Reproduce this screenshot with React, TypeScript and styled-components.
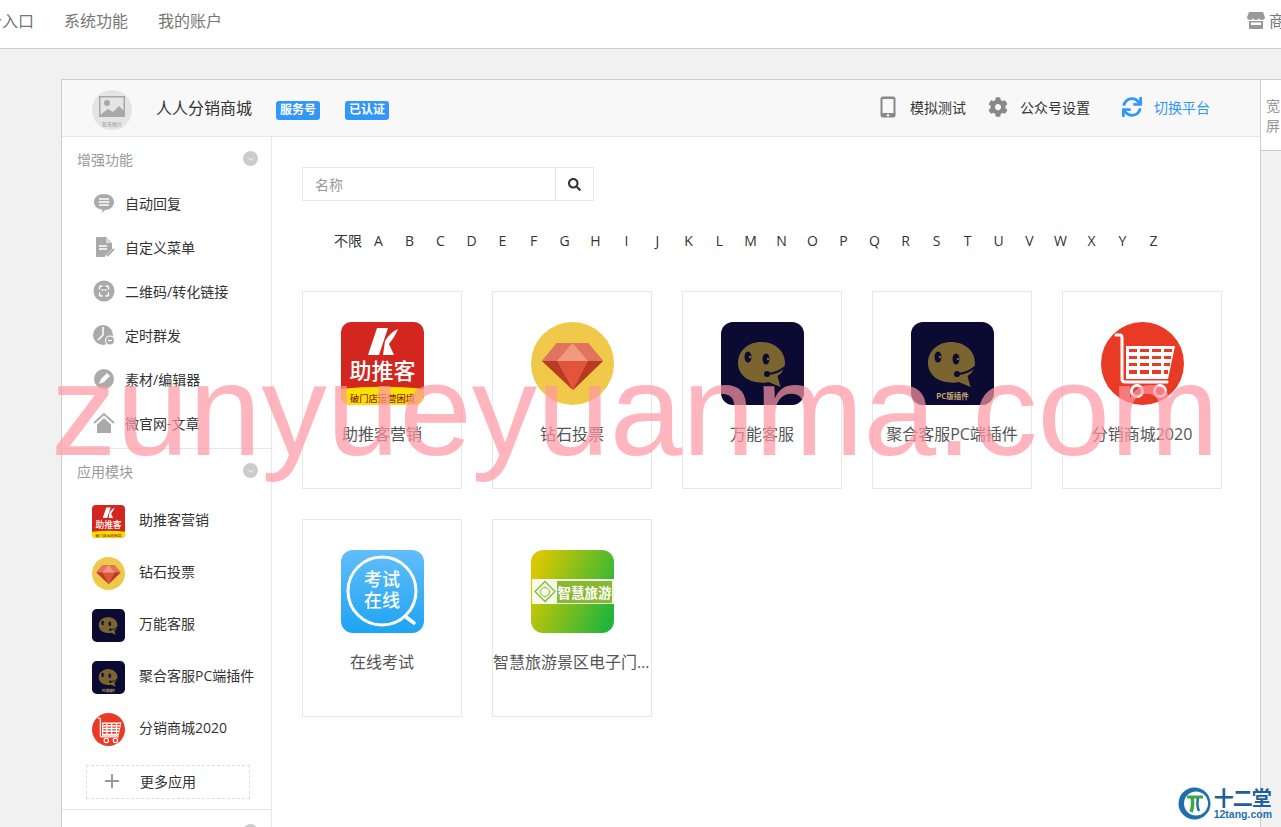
import React from "react";
import styled, { createGlobalStyle } from "styled-components";
import { FaCog, FaSearch, FaSync } from "react-icons/fa";
import { FiChevronDown } from "react-icons/fi";

const GlobalStyle = createGlobalStyle`
  html, body {
    margin: 0;
    padding: 0;
    background: #f1f1f1;
  }
  * {
    box-sizing: border-box;
  }
`;

const Page = styled.div`
  position: relative;
  width: 1281px;
  height: 827px;
  overflow: hidden;
  background: #f1f1f1;
  font-family: "Open Sans", "Noto Sans CJK SC", sans-serif;
  font-size: 14px;
  color: #333;
`;

const TopBar = styled.div`
  display: flex;
  height: 49px;
  padding: 0 0 8px 0;
  margin-left: -14px;
  margin-right: -20px;
  align-items: center;
  gap: 30px;
  background: #fff;
  border-bottom: 1px solid #ccc;
  font-size: 16px;
  color: #777;
  white-space: nowrap;
`;

const TopRight = styled.div`
  display: flex;
  align-items: center;
  gap: 4px;
  margin-left: auto;
`;

const Body = styled.div`
  display: flex;
  align-items: flex-start;
  padding: 30px 0 0 61px;
`;

const Panel = styled.div`
  flex: none;
  width: 1200px;
  height: 760px;
  background: #fff;
  border: 1px solid #ccc;
  border-bottom: none;
`;

const WideTab = styled.div`
  flex: none;
  width: 20px;
  height: 72px;
  padding: 16px 0 0 5px;
  background: #fff;
  border-top: 1px solid #ccc;
  border-bottom: 1px solid #ccc;
  color: #999;
  line-height: 20px;
  overflow: hidden;
`;

const Header = styled.div`
  display: flex;
  align-items: center;
  height: 57px;
  padding: 0 50px 2px 30px;
  background: #f8f8f8;
  border-bottom: 1px solid #e7e7e7;
`;

const Avatar = styled.div`
  position: relative;
  flex: none;
  width: 40px;
  height: 40px;
  margin: 5px 24px 0 0;
  border-radius: 50%;
  background: #e5e5e5;
  overflow: hidden;
`;

const AvatarNote = styled.span`
  position: absolute;
  left: 0;
  right: 0;
  bottom: 3px;
  text-align: center;
  font-size: 5px;
  line-height: 6px;
  color: #999;
`;

const ShopName = styled.div`
  font-size: 16px;
  color: #333;
`;

const Badge = styled.span<{ $gap: number }>`
  display: block;
  width: 44px;
  height: 19px;
  margin: 6px 0 0 ${(p) => p.$gap}px;
  border-radius: 3px;
  background: #3296fa;
  color: #fff;
  font-size: 12px;
  font-weight: 700;
  line-height: 18px;
  text-align: center;
`;

const HeaderActions = styled.div`
  display: flex;
  align-items: center;
  margin-left: auto;
`;

const HeaderAction = styled.div<{ $gap: number; $iconGap: number; $active?: boolean }>`
  display: flex;
  align-items: center;
  gap: ${(p) => p.$iconGap}px;
  margin-left: ${(p) => p.$gap}px;
  color: ${(p) => (p.$active ? "#3296fa" : "#333")};
`;

const Columns = styled.div`
  display: flex;
  height: 700px;
`;

const Sidebar = styled.div`
  flex: none;
  width: 210px;
  border-right: 1px solid #e7e7e7;
`;

const SideSection = styled.div<{ $last?: boolean }>`
  padding-bottom: ${(p) => (p.$last ? 0 : 2)}px;
  border-bottom: ${(p) => (p.$last ? "none" : "1px solid #e7e7e7")};
`;

const SideTitle = styled.div`
  display: flex;
  align-items: center;
  justify-content: space-between;
  height: 45px;
  padding: 0 13px 2px 15px;
  color: #999;
`;

const Chevron = styled.span`
  display: flex;
  align-items: center;
  justify-content: center;
  width: 15px;
  height: 15px;
  border-radius: 50%;
  background: #ccc;
  color: #fff;
  font-size: 10px;
`;

const MenuRow = styled.div`
  display: flex;
  align-items: center;
  height: 44px;
  padding: 0 0 2px 30px;
  gap: 9px;
  font-size: 14px;
  color: #333;
`;

const AppRow = styled.div`
  display: flex;
  align-items: center;
  height: 52px;
  padding: 3px 0 0 30px;
  gap: 14px;
  color: #333;
  white-space: nowrap;
`;

const AppLabel = styled.span`
  margin-bottom: 5px;
`;

const MoreApps = styled.div`
  display: flex;
  align-items: center;
  width: 164px;
  height: 34px;
  margin: 11px 0 8px 24px;
  padding: 0 0 3px 18px;
  gap: 21px;
  border: 1px dashed #ddd;
  color: #333;
`;

const Content = styled.div`
  flex: 1;
  padding: 30px 0 0 30px;
`;

const SearchBox = styled.div`
  display: flex;
  width: 292px;
  height: 34px;
  border: 1px solid #e7e7e7;
`;

const SearchInput = styled.div`
  flex: 1;
  padding-left: 12px;
  color: #999;
  line-height: 34px;
  border-right: 1px solid #e7e7e7;
`;

const SearchButton = styled.div`
  display: flex;
  align-items: center;
  justify-content: center;
  width: 37px;
  color: #333;
  font-size: 13px;
`;

const Letters = styled.div`
  display: flex;
  height: 28px;
  margin: 25px 0 37px 31px;
  align-items: center;
  color: #333;
`;

const Letter = styled.span<{ $wide?: boolean }>`
  display: block;
  width: ${(p) => (p.$wide ? 30 : 31)}px;
  text-align: center;
  white-space: nowrap;
`;

const CardGrid = styled.div`
  display: flex;
  flex-wrap: wrap;
  gap: 30px;
  width: 950px;
`;

const Card = styled.div`
  display: flex;
  flex-direction: column;
  align-items: center;
  width: 160px;
  height: 198px;
  padding-top: 30px;
  border: 1px solid #e7e7e7;
`;

const CardTitle = styled.div`
  width: 158px;
  margin-top: 17px;
  font-size: 16px;
  line-height: 24px;
  text-align: center;
  color: #555;
  white-space: nowrap;
  overflow: hidden;
  text-overflow: ellipsis;
`;

const Watermark = styled.div`
  position: absolute;
  top: 345px;
  left: 51px;
  font-family: "Liberation Sans", sans-serif;
  font-size: 130.5px;
  line-height: 130px;
  color: rgba(255, 150, 162, 0.7);
  white-space: nowrap;
  pointer-events: none;
`;

const BrandMark = styled.div`
  position: absolute;
  right: 9px;
  bottom: 7px;
  display: flex;
  align-items: center;
  gap: 3px;
`;

const BrandText = styled.div`
  display: flex;
  flex-direction: column;
  align-items: flex-start;
`;

const BrandName = styled.span`
  font-size: 20px;
  font-weight: 700;
  line-height: 21px;
  letter-spacing: -1px;
  color: #1f5f9e;
`;

const BrandUrl = styled.span`
  font-family: "Liberation Sans", sans-serif;
  font-size: 10.5px;
  font-weight: 700;
  line-height: 11px;
  color: #1f6fae;
`;

const CJK = `"Noto Sans CJK SC", sans-serif`;

const IconBox: React.FC<{ size: number; children: React.ReactNode }> = ({ size, children }) => (
  <svg width={size} height={size} viewBox="0 0 83 83" style={{ flex: "none", display: "block" }}>
    {children}
  </svg>
);

const FaceIcon: React.FC<{ pc?: boolean }> = ({ pc }) => (
  <>
    <rect width="83" height="83" rx="12" fill="#0b0a33" />
    <path
      d="M40 20c14 0 24 9 24 21 0 2-.5 4-1.500 6-1 3-3 5-6 7l3 11-12-5c-2 .5-5 1-8 .5C26 60 17 52 17 41c0-12 10-21 23-21z"
      fill="#7a6430"
    />
    <ellipse cx="27" cy="35" rx="3.500" ry="5.500" fill="#0b0a33" />
    <circle cx="29" cy="35" r="1.300" fill="#7a6430" />
    <ellipse cx="45" cy="37" rx="3.500" ry="5.500" fill="#0b0a33" />
    <circle cx="47" cy="37" r="1.300" fill="#7a6430" />
    <circle cx="46" cy="52" r="3" fill="#0b0a33" />
    <path d="M46 52c7 0 12-2 18-7" stroke="#0b0a33" strokeWidth="2" fill="none" />
    {pc && (
      <text x="41.500" y="77" textAnchor="middle" fontSize="7.500" fontWeight="700" fill="#c8ac6a" fontFamily={CJK}>
        PC版插件
      </text>
    )}
  </>
);

const KIcon = () => (
  <>
    <rect width="83" height="83" rx="10" fill="#d2261f" />
    <path d="M36 6h11l-9 27H27zM44 19C47 14 52 9 57 7c-2 5-5 10-9 15l5 11H42z" fill="#fff" />
    <text x="41.500" y="57" textAnchor="middle" fontSize="22" fontWeight="500" fill="#fff" fontFamily={CJK}>
      助推客
    </text>
    <path d="M0 67c28-3 55-3 83 0v6a10 10 0 0 1-10 10H10A10 10 0 0 1 0 73z" fill="#ffe000" />
    <text x="41.500" y="79.500" textAnchor="middle" fontSize="9.300" fontWeight="500" fill="#8a2a1e" fontFamily={CJK}>
      破门店运营困境
    </text>
  </>
);

const GemIcon = () => (
  <>
    <circle cx="41.500" cy="41.500" r="41.500" fill="#f0c84a" />
    <path d="M26 21h31l15 18-30 29L11 39z" fill="#e2553a" />
    <path d="M26 21h31l15 18H11z" fill="#e2735e" />
    <path d="M41.500 21 57 39H26z" fill="#f09a80" />
    <path d="M11 39h15l16 29zM72 39H57L42 68z" fill="#b83c22" />
  </>
);

const CartIcon = () => (
  <>
    <circle cx="41.500" cy="41.500" r="41.500" fill="#e93a25" />
    <path d="M15 13h4q2 0 2 3v41q0 3 3 3h42" stroke="#fff" strokeWidth="3" fill="none" strokeLinecap="round" />
    <path d="M25 24h49l-7 33H25z" fill="#fff" />
    <path
      d="M28 27h8v3h-8zM39 27h9v3h-9zM51 27h9v3h-9zM63 27h8v3h-8zM28 34h8v3h-8zM39 34h9v3h-9zM51 34h9v3h-9zM63 34h7v3h-7zM28 41h8v3h-8zM39 41h9v3h-9zM51 41h9v3h-9zM63 41h6v3h-6zM28 48h8v4h-8zM39 48h9v4h-9zM51 48h9v4h-9zM63 48h4v4h-4z"
      fill="#e93a25"
    />
    <circle cx="36" cy="69" r="5.500" fill="#e93a25" stroke="#fff" strokeWidth="3" />
    <circle cx="59" cy="69" r="5.500" fill="#e93a25" stroke="#fff" strokeWidth="3" />
  </>
);

const ExamIcon = () => (
  <>
    <defs>
      <linearGradient id="examFill" x1="0" y1="0" x2="0" y2="1">
        <stop offset="0" stopColor="#62bdfb" />
        <stop offset="1" stopColor="#1ea4f2" />
      </linearGradient>
    </defs>
    <rect width="83" height="83" rx="12" fill="url(#examFill)" />
    <circle cx="41" cy="41" r="34" fill="none" stroke="#fff" strokeWidth="3" />
    <path d="M65 67l8 6" stroke="#fff" strokeWidth="3.500" strokeLinecap="round" />
    <text x="41" y="36" textAnchor="middle" fontSize="18" fontWeight="500" fill="#fff" fontFamily={CJK}>
      考试
    </text>
    <text x="41" y="57" textAnchor="middle" fontSize="18" fontWeight="500" fill="#fff" fontFamily={CJK}>
      在线
    </text>
  </>
);

const TourIcon = () => (
  <>
    <defs>
      <linearGradient id="tourFill" x1="0" y1="0.3" x2="1" y2="0.7">
        <stop offset="0" stopColor="#dcc800" />
        <stop offset="1" stopColor="#22b53a" />
      </linearGradient>
    </defs>
    <rect width="83" height="83" rx="12" fill="url(#tourFill)" />
    <rect x="1" y="29" width="82" height="25" fill="#fff" opacity="0.9" />
    <rect x="26" y="31" width="55" height="22" fill="#8ab82e" />
    <path d="M14 31.500 24 41.500 14 51.500 4 41.500z" fill="none" stroke="#7dbb3c" strokeWidth="1.300" />
    <circle cx="14" cy="42" r="4.500" fill="none" stroke="#7dbb3c" strokeWidth="1" />
    <text x="53.500" y="47.500" textAnchor="middle" fontSize="13.500" fontWeight="700" fill="#fff" fontFamily={CJK}>
      智慧旅游
    </text>
  </>
);

const grayIcon = "#aaa";

const ChatGlyph = () => (
  <svg width="24" height="24" viewBox="0 0 24 24">
    <path d="M12 3c6 0 10 3.500 10 8s-4 8-9 8l-3 3 .5-3.300C5 18 2 15 2 11c0-4.500 4-8 10-8z" fill={grayIcon} />
    <path d="M7 8h10M6.500 11h11M7 14h10" stroke="#fff" strokeWidth="1.400" />
  </svg>
);

const DocGlyph = () => (
  <svg width="24" height="24" viewBox="0 0 24 24">
    <path d="M4 2h10l6 6v6l-7 7v1H5a1 1 0 0 1-1-1z" fill={grayIcon} />
    <path d="M14 2v6h6z" fill="#d8d8d8" />
    <path d="M7 11h8M7 14h8" stroke="#fff" strokeWidth="1.500" />
    <path d="M15 21l7-7" stroke={grayIcon} strokeWidth="2" />
  </svg>
);

const ScanGlyph = () => (
  <svg width="24" height="24" viewBox="0 0 24 24">
    <circle cx="12" cy="12" r="10.500" fill={grayIcon} />
    <path
      d="M7.500 10V8.500q0-1.500 1.500-1.500h1M14 7h1q1.500 0 1.500 1.500V10M7.500 14v1.500Q7.500 17 9 17h1M16.500 14v1.500Q16.500 17 15 17h-1"
      fill="none"
      stroke="#fff"
      strokeWidth="1.400"
      strokeLinecap="round"
    />
    <circle cx="10.500" cy="11" r="0.900" fill="#fff" />
    <circle cx="13.500" cy="11" r="0.900" fill="#fff" />
  </svg>
);

const ClockGlyph = () => (
  <svg width="24" height="24" viewBox="0 0 24 24">
    <circle cx="11" cy="12" r="10" fill={grayIcon} />
    <path d="M11 4v8l-5 5" fill="none" stroke="#fff" strokeWidth="1.500" />
    <circle cx="18" cy="17.500" r="4.500" fill={grayIcon} stroke="#fff" strokeWidth="1.200" />
    <path d="M16 17.500h4" stroke="#fff" strokeWidth="1.200" />
  </svg>
);

const PencilGlyph = () => (
  <svg width="24" height="24" viewBox="0 0 24 24">
    <circle cx="12" cy="12" r="10" fill={grayIcon} />
    <path d="M7 17l2-5 6-6 3 3-6 6z" fill="#fff" />
  </svg>
);

const HomeGlyph = () => (
  <svg width="24" height="24" viewBox="0 0 24 24">
    <path d="M2 12 12 3l10 9" fill="none" stroke={grayIcon} strokeWidth="2" />
    <path d="M5 13.500 12 7l7 6.500V22H5z" fill={grayIcon} />
  </svg>
);

const PhoneGlyph = () => (
  <svg width="16" height="22" viewBox="0 0 16 22">
    <rect x="0.500" y="0.500" width="15" height="21" rx="2.500" fill="#888" />
    <rect x="2.500" y="3" width="11" height="14" fill="#f8f8f8" />
    <circle cx="8" cy="19.300" r="1.200" fill="#f8f8f8" />
  </svg>
);

const StoreGlyph = () => (
  <svg width="18" height="17" viewBox="0 0 18 17">
    <path d="M2 0h14l2 5.500c0 1.500-1.500 2.500-3 2.500-1 0-2-.5-3-1.500C11 7.500 10 8 9 8s-2-.5-3-1.500C5 7.500 4 8 3 8 1.500 8 0 7 0 5.500z" fill="#999" />
    <path d="M2 9h14v8H2z" fill="#999" />
    <path d="M4 10.500h10V13H4z" fill="#fff" />
  </svg>
);

const menuItems: [string, React.ReactNode][] = [
  ["自动回复", <ChatGlyph />],
  ["自定义菜单", <DocGlyph />],
  ["二维码/转化链接", <ScanGlyph />],
  ["定时群发", <ClockGlyph />],
  ["素材/编辑器", <PencilGlyph />],
  ["微官网-文章", <HomeGlyph />],
];

const apps: { name: string; art: React.ReactNode }[] = [
  { name: "助推客营销", art: <KIcon /> },
  { name: "钻石投票", art: <GemIcon /> },
  { name: "万能客服", art: <FaceIcon /> },
  { name: "聚合客服PC端插件", art: <FaceIcon pc /> },
  { name: "分销商城2020", art: <CartIcon /> },
  { name: "在线考试", art: <ExamIcon /> },
  { name: "智慧旅游景区电子门票系统", art: <TourIcon /> },
];

const letters = "ABCDEFGHIJKLMNOPQRSTUVWXYZ".split("");

const App: React.FC = () => {
  return (
    <Page>
      <GlobalStyle />
      <TopBar>
        <span>个入口</span>
        <span>系统功能</span>
        <span>我的账户</span>
        <TopRight>
          <StoreGlyph />
          <span>商城</span>
        </TopRight>
      </TopBar>
      <Body>
        <Panel>
          <Header>
            <Avatar>
              <svg width="40" height="40" viewBox="0 0 40 40">
                <rect x="7" y="6" width="26" height="21" fill="#a8a8a8" />
                <rect x="8.500" y="7.500" width="23" height="18" fill="#e5e5e5" />
                <circle cx="15" cy="13" r="3" fill="#a8a8a8" />
                <path d="M8 25l8-6 5 3 6-6 5 5v5H8z" fill="#a8a8a8" />
              </svg>
              <AvatarNote>暂无图片</AvatarNote>
            </Avatar>
            <ShopName>人人分销商城</ShopName>
            <Badge $gap={24}>服务号</Badge>
            <Badge $gap={25}>已认证</Badge>
            <HeaderActions>
              <HeaderAction $gap={0} $iconGap={14}>
                <PhoneGlyph />
                模拟测试
              </HeaderAction>
              <HeaderAction $gap={22} $iconGap={12}>
                <FaCog size={20} color="#888" />
                公众号设置
              </HeaderAction>
              <HeaderAction $gap={32} $iconGap={12} $active>
                <FaSync size={20} />
                切换平台
              </HeaderAction>
            </HeaderActions>
          </Header>
          <Columns>
            <Sidebar>
              <SideSection>
                <SideTitle>
                  增强功能
                  <Chevron>
                    <FiChevronDown />
                  </Chevron>
                </SideTitle>
                {menuItems.map(([label, icon]) => (
                  <MenuRow key={label}>
                    {icon}
                    {label}
                  </MenuRow>
                ))}
              </SideSection>
              <SideSection>
                <SideTitle>
                  应用模块
                  <Chevron>
                    <FiChevronDown />
                  </Chevron>
                </SideTitle>
                {apps.slice(0, 5).map((app) => (
                  <AppRow key={app.name}>
                    <IconBox size={33}>{app.art}</IconBox>
                    <AppLabel>{app.name}</AppLabel>
                  </AppRow>
                ))}
                <MoreApps>
                  <svg width="14" height="14" viewBox="0 0 14 14">
                    <path d="M7 0v14M0 7h14" stroke="#999" strokeWidth="2" />
                  </svg>
                  更多应用
                </MoreApps>
              </SideSection>
              <SideSection $last>
                <SideTitle>
                  <span />
                  <Chevron>
                    <FiChevronDown />
                  </Chevron>
                </SideTitle>
              </SideSection>
            </Sidebar>
            <Content>
              <SearchBox>
                <SearchInput>名称</SearchInput>
                <SearchButton>
                  <FaSearch />
                </SearchButton>
              </SearchBox>
              <Letters>
                <Letter $wide>不限</Letter>
                {letters.map((l) => (
                  <Letter key={l}>{l}</Letter>
                ))}
              </Letters>
              <CardGrid>
                {apps.map((app) => (
                  <Card key={app.name}>
                    <IconBox size={83}>{app.art}</IconBox>
                    <CardTitle>{app.name}</CardTitle>
                  </Card>
                ))}
              </CardGrid>
            </Content>
          </Columns>
        </Panel>
        <WideTab>宽屏</WideTab>
      </Body>
      <Watermark>zunyueyuanma.com</Watermark>
      <BrandMark>
        <svg width="33" height="33" viewBox="0 0 33 33">
          <circle cx="16.500" cy="16.500" r="16" fill="#1f6fae" />
          <circle cx="18" cy="16.500" r="12" fill="#fff" />
          <path d="M9 10h16" stroke="#3aa845" strokeWidth="3" fill="none" />
          <path d="M14 10c1 5 1 10-1 15" stroke="#3aa845" strokeWidth="3.500" fill="none" />
          <path d="M20 11c-1 5-1 9 1 13" stroke="#1f6fae" strokeWidth="2.500" fill="none" />
        </svg>
        <BrandText>
          <BrandName>十二堂</BrandName>
          <BrandUrl>12tang.com</BrandUrl>
        </BrandText>
      </BrandMark>
    </Page>
  );
};

export default App;
